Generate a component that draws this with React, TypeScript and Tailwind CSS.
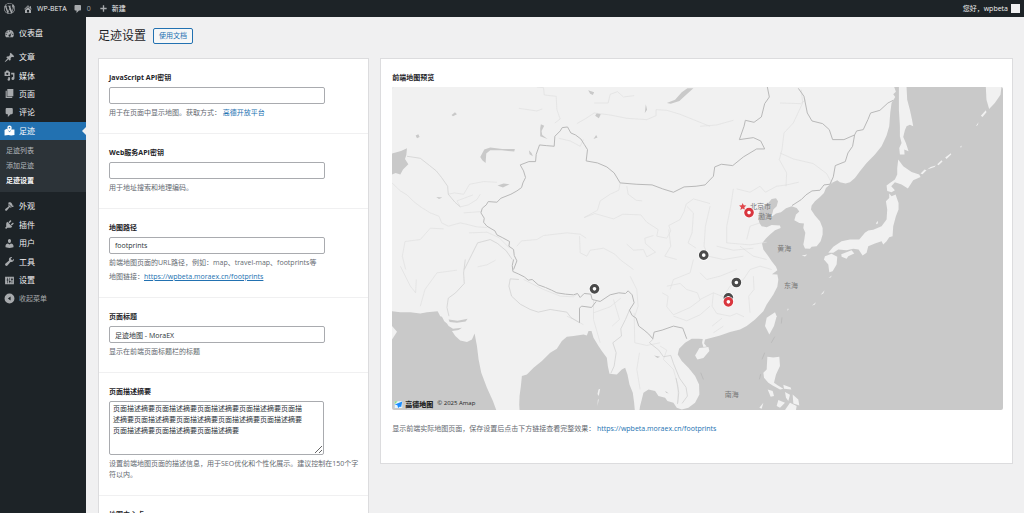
import clsx from 'clsx'
import type { ReactNode } from 'react'

const SITE_URL = 'https://wpbeta.moraex.cn/footprints'

function Icon({ d, className }: { d: string, className?: string }) {
  return (
    <svg viewBox="0 0 20 20" fill="currentColor" fillRule="evenodd" aria-hidden="true" className={clsx('shrink-0', className)}>
      <path d={d} />
    </svg>
  )
}

const icons = {
  wordpress: 'M20 10c0-5.51-4.49-10-10-10C4.48 0 0 4.49 0 10c0 5.52 4.48 10 10 10 5.51 0 10-4.48 10-10zM7.780 15.370L4.370 6.220c.55-.02 1.170-.08 1.170-.08.5-.06.44-1.130-.06-1.110 0 0-1.450.11-2.370.11-.18 0-.37 0-.58-.01C4.120 2.690 6.870 1.110 10 1.110c2.330 0 4.450.87 6.050 2.340-.68-.11-1.650.39-1.650 1.580 0 .74.45 1.360.9 2.100.35.61.55 1.360.55 2.460 0 1.490-1.400 5-1.400 5l-3.030-8.370c.54-.02.82-.17.82-.17.5-.05.44-1.250-.06-1.220 0 0-1.440.12-2.380.12-.87 0-2.330-.12-2.330-.12-.5-.03-.56 1.200-.06 1.220l.92.08 1.260 3.410zM17.410 10c.24-.64.74-1.870.43-4.250.7 1.290 1.050 2.710 1.050 4.250 0 3.290-1.730 6.240-4.400 7.780.97-2.590 1.940-5.200 2.920-7.780zM6.100 18.090C3.120 16.650 1.110 13.530 1.110 10c0-1.300.23-2.480.72-3.590C3.250 10.300 4.670 14.200 6.100 18.090zm4.030-6.630l2.580 6.980c-.86.29-1.760.45-2.710.45-.79 0-1.570-.11-2.290-.33.81-2.380 1.620-4.740 2.420-7.100z',
  home: 'M16 8.500l1.530 1.530-1.060 1.060L10 4.600l-6.470 6.490-1.060-1.060L10 2.500l4 4v-2h2v4zm-6-2.460l6 5.990V18H4v-5.970zM12 17v-5H8v5h4z',
  comment: 'M5 2h9c1.100 0 2 .9 2 2v7c0 1.100-.9 2-2 2h-2l-5 5v-5H5c-1.100 0-2-.9-2-2V4c0-1.100.9-2 2-2z',
  plus: 'M8.500 3h3v5.500H17v3h-5.500V17h-3v-5.500H3v-3h5.500z',
  dashboard: 'M3.760 17h12.480c1.100-1.460 1.760-3.190 1.760-5.150C18 7.200 14.420 3.500 10 3.500S2 7.200 2 11.850C2 13.810 2.660 15.540 3.760 17zM10 4.500a1 1 0 110 2 1 1 0 010-2zM5.500 6.500a1 1 0 110 2 1 1 0 010-2zM14.500 7.200l-2.600 5.600a2 2 0 11-1.300-.8zM4 10.500a1 1 0 110 2 1 1 0 010-2zm12 0a1 1 0 110 2 1 1 0 010-2z',
  post: 'M10.440 3.020l1.820-1.820 6.360 6.350-1.830 1.820c-1.050-.68-2.480-.57-3.410.36l-.75.750c-.92.930-1.040 2.350-.35 3.410l-1.830 1.820-2.410-2.410-2.800 2.790c-.42.420-3.380 2.710-3.800 2.290s1.860-3.390 2.280-3.810l2.790-2.790L4.100 9.360l1.830-1.820c1.050.69 2.480.57 3.400-.36l.75-.75c.93-.920 1.050-2.350.36-3.410z',
  media: 'M1 3h2l1-2h4l1 2h2v8H1zM6 5a2 2 0 100 4 2 2 0 000-4zM13 5h6v10.500a2.700 2.700 0 11-2.500-2.700V8H13zM7 13h4v4.500A2.300 2.300 0 118 15z',
  page: 'M6 15V2h11v13zM3 5h2v11h10v2H3z',
  footprints: 'M1 9l4-2 2 1c.5 1.500 1.700 3.500 3 5 1.500-1.500 2.700-3.200 3-5h6v10l-6 1-5-1-7 1zM10 1a4 4 0 014 4c0 3-2.500 5-4 7-1.500-2-4-4-4-7a4 4 0 014-4zm0 2.500a1.500 1.500 0 100 3 1.500 1.500 0 000-3z',
  appearance: 'M14.480 11.060L7.410 3.990l1.500-1.500c.5-.56 2.300-.47 3.510.32 1.210.8 1.430 1.280 2 2.100 1.180 1.660 1.380 2.720 1.190 3.580.610.110 2.160-.56 2.350.72-.6 1.300-2.200 1.900-3.480 1.850zM6.700 4.700l7.070 7.070c-.72.720-1.420.72-2.120 0-.8-.8-1.600-.4-2.300.3L5.300 17.300c-.78.780-2.050.78-2.830 0s-.78-2.050 0-2.830l5.230-4.050c.7-.7 1.100-1.500.3-2.300-.7-.7-.7-1.400 0-2.120z',
  plugin: 'M13.110 4.360L9.870 7.600 8 5.730l3.240-3.240c.350-.34 1.050-.2 1.560.32.52.51.66 1.210.31 1.550zm-8 1.770l.91-1.120 9.010 9.010-1.190.84c-.71.710-2.630 1.160-3.820 1.160H6.140L4.900 17.260c-.59.59-1.540.59-2.120 0-.59-.58-.59-1.530 0-2.120l1.240-1.240v-3.880c0-1.130.4-3.190 1.090-3.890zm7.260 3.970l3.240-3.240c.340-.35 1.040-.21 1.550.31.520.51.66 1.210.31 1.550l-3.240 3.250z',
  users: 'M10 9.250c-2.270 0-2.730-3.440-2.730-3.440C7 4.020 7.820 2 9.970 2c2.160 0 2.980 2.020 2.710 3.810 0 0-.41 3.440-2.680 3.440zm0 2.570L12.720 10c2.390 0 4.520 2.330 4.520 4.530v2.490s-3.650 1.130-7.240 1.130c-3.650 0-7.240-1.130-7.240-1.130v-2.490c0-2.250 1.940-4.480 4.470-4.480z',
  tools: 'M16.680 9.770c-1.340 1.340-3.300 1.670-4.950.99l-5.410 6.520c-.99.99-2.590.99-3.580 0s-.99-2.590 0-3.570l6.520-5.420c-.68-1.650-.35-3.610.99-4.950 1.280-1.280 3.120-1.620 4.720-1.060l-2.890 2.890 2.820 2.820 2.860-2.870c.53 1.580.18 3.390-1.080 4.650z',
  settings: 'M2 3h16v14H2zM6 5v3H5v2h1v5h1v-5h1V8H7V5zm4 0v6H9v2h1v2h1v-2h1v-2h-1V5zm4 0v2h-1v2h1v6h1V9h1V7h-1V5z',
  collapse: 'M10 1a9 9 0 110 18 9 9 0 010-18zm2 5.500L7 10l5 3.500z',
}

const contentMenu = [
  { icon: icons.post, label: '文章' },
  { icon: icons.media, label: '媒体' },
  { icon: icons.page, label: '页面' },
  { icon: icons.comment, label: '评论' },
  { icon: icons.footprints, label: '足迹', current: true },
]

const footprintsMenu = [
  { label: '足迹列表' },
  { label: '添加足迹' },
  { label: '足迹设置', current: true },
]

const systemMenu = [
  { icon: icons.appearance, label: '外观' },
  { icon: icons.plugin, label: '插件' },
  { icon: icons.users, label: '用户' },
  { icon: icons.tools, label: '工具' },
  { icon: icons.settings, label: '设置' },
]

function AdminBar() {
  return (
    <header className="flex h-[17px] shrink-0 items-center justify-between bg-[#1d2327] px-1 text-[7px] text-[#f0f0f1]">
      <nav className="flex items-center">
        <a href="#wp" aria-label="WordPress">
          <Icon d={icons.wordpress} className="size-[11px] text-[#a7aaad]" />
        </a>
        <a href="#site" className="ml-2 flex items-center gap-1">
          <Icon d={icons.home} className="size-[10px] text-[#a7aaad]" />
          WP-BETA
        </a>
        <a href="#comments" className="ml-[6px] flex items-center gap-1 text-[#a7aaad]">
          <Icon d={icons.comment} className="size-[10px]" />
          0
        </a>
        <a href="#new" className="ml-2 flex items-center gap-1">
          <Icon d={icons.plus} className="size-[9px] text-[#a7aaad]" />
          新建
        </a>
      </nav>
      <a href="#profile" className="flex items-center gap-[3px]">
        您好，wpbeta
        <span className="size-[9px] bg-[#f0f0f1]" />
      </a>
    </header>
  )
}

function MenuLink({ icon, label, current }: { icon: string, label: string, current?: boolean }) {
  return (
    <a
      href="#menu"
      className={clsx(
        'relative flex h-full items-center gap-1 pl-1 text-[8px]',
        current ? 'bg-[#2271b1] text-white' : 'text-[#f0f0f1]',
      )}
    >
      <Icon d={icon} className={clsx('size-[11px]', current ? 'text-white' : 'text-[#a7aaad]')} />
      {label}
      {current ? (
        <span className="absolute right-0 border-y-4 border-r-4 border-y-transparent border-r-[#f0f0f1]" />
      ) : null}
    </a>
  )
}

function Sidebar() {
  return (
    <nav className="w-[86px] shrink-0 bg-[#1d2327] pt-[7px]">
      <div className="mb-[6px] h-[18px]">
        <MenuLink icon={icons.dashboard} label="仪表盘" />
      </div>
      <ul className="grid h-[92px] auto-rows-fr">
        {contentMenu.map(item => (
          <li key={item.label}><MenuLink {...item} /></li>
        ))}
      </ul>
      <ul className="mb-[5px] bg-[#2c3338] px-[6px] pt-[3px] pb-1">
        {footprintsMenu.map(item => (
          <li key={item.label} className="h-[15px] text-[7px] leading-[15px]">
            <a href="#submenu" className={item.current ? 'font-bold text-white' : 'text-[#b4b9be]'}>{item.label}</a>
          </li>
        ))}
      </ul>
      <ul className="grid h-[111px] auto-rows-fr">
        {systemMenu.map(item => (
          <li key={item.label}><MenuLink {...item} /></li>
        ))}
        <li>
          <button type="button" className="flex h-full items-center gap-1 pl-1 text-[7px] text-[#a7aaad]">
            <Icon d={icons.collapse} className="size-[11px]" />
            收起菜单
          </button>
        </li>
      </ul>
    </nav>
  )
}

function Field({ id, label, children }: { id: string, label: string, children: ReactNode }) {
  return (
    <div className="border-b border-[#f0f0f1] px-[10px] pt-[13px] pb-[15px]">
      <label htmlFor={id} className="mb-[3px] block text-[7px] leading-[12px] font-bold text-[#1d2327]">{label}</label>
      {children}
    </div>
  )
}

function TextInput({ id, value = '' }: { id: string, value?: string }) {
  return (
    <input
      id={id}
      type="text"
      defaultValue={value}
      className="block h-[17px] w-[216px] rounded-[2px] border border-[#a9abaf] bg-white px-[5px] text-[7px] text-[#2c3338]"
    />
  )
}

function Hint({ children }: { children: ReactNode }) {
  return <p className="mt-[3px] text-[7px] leading-[11px] text-[#646970]">{children}</p>
}

function SettingsForm() {
  return (
    <form className="border border-[#dcdcde] bg-white">
      <Field id="js-key" label="JavaScript API密钥">
        <TextInput id="js-key" />
        <Hint>
          用于在页面中显示地图。获取方式：
          {' '}
          <a href="#amap" className="text-[#2271b1]">高德开放平台</a>
        </Hint>
      </Field>
      <Field id="web-key" label="Web服务API密钥">
        <TextInput id="web-key" />
        <Hint>用于地址搜索和地理编码。</Hint>
      </Field>
      <Field id="map-path" label="地图路径">
        <TextInput id="map-path" value="footprints" />
        <Hint>前端地图页面的URL路径，例如：map、travel-map、footprints等</Hint>
        <Hint>
          地图链接：
          <a href={SITE_URL} className="text-[#2271b1] underline">{SITE_URL}</a>
        </Hint>
      </Field>
      <Field id="page-title" label="页面标题">
        <TextInput id="page-title" value="足迹地图 - MoraEX" />
        <Hint>显示在前端页面标题栏的标题</Hint>
      </Field>
      <Field id="page-desc" label="页面描述摘要">
        <textarea
          id="page-desc"
          defaultValue={'页面描述摘要'.repeat(12)}
          className="block h-[54px] w-[215px] rounded-[2px] border border-[#a9abaf] bg-white py-px pr-[20px] pl-[3px] text-[7px] leading-[11px] text-[#2c3338]"
        />
        <Hint>设置前端地图页面的描述信息，用于SEO优化和个性化展示。建议控制在150个字符以内。</Hint>
      </Field>
      <Field id="map-center" label="地图中心点">
        <TextInput id="map-center" />
      </Field>
    </form>
  )
}

const mainland = 'M35 82H1543L1548 96 1540 104 1546 112 1535 130 1531 160 1528 200 1520 228 1505 260 1485 285 1460 310 1440 335 1425 355 1410 368 1397 372 1380 368 1372 362 1355 370 1338 385 1332 400 1320 412 1305 425 1295 438 1293 450 1305 468 1320 485 1328 505 1328 525 1322 545 1310 560 1295 562 1290 568 1275 567 1270 555 1273 540 1276 520 1270 505 1272 492 1258 490 1243 482 1248 465 1258 456 1250 445 1235 440 1218 446 1203 458 1188 462 1170 475 1177 462 1180 450 1190 440 1194 425 1188 416 1175 418 1165 430 1150 440 1138 455 1135 475 1138 490 1145 500 1160 503 1175 496 1200 498 1202 505 1185 512 1170 525 1157 538 1146 552 1150 570 1165 590 1175 605 1188 622 1192 632 1176 644 1192 645 1195 660 1192 682 1180 705 1160 735 1150 755 1125 780 1100 800 1080 810 1050 818 1020 828 995 835 975 840 972 852 980 861 970 863 966 850 968 839 955 838 935 838 915 850 897 868 893 885 905 905 925 925 945 950 957 975 958 1005 945 1030 925 1045 905 1050 890 1045 880 1030 862 1025 855 1015 835 1010 825 995 805 990 790 1000 785 1020 780 1040 778 1052H764L762 1030 758 1000 748 975 742 945 735 925 725 930 710 945 688 943 683 920 680 895 665 875 655 860 640 835 634 815 625 815 620 828 610 825 580 830 560 832 545 845 530 868 510 880 485 905 460 925 440 945 425 950 422 980 418 1010 417 1035 418 1052H348L338 1025 320 985 303 940 295 900 290 860 283 822 275 840 260 848 240 843 225 830 215 815 235 812 245 805 218 808 205 800 200 792 192 785 185 772 180 770 172 755 140 758 120 762 90 758 60 758 35 755Z'

const islands = [
  // Sakhalin, Kamchatka
  'M1557 82H1580L1582 120 1590 150 1596 178 1600 200 1590 195 1580 200 1575 212 1570 232 1578 250 1586 275 1573 270 1574 285 1560 285 1558 265 1565 250 1560 230 1560 200 1557 150Z',
  'M1818 82H1865L1862 105 1845 130 1828 148 1820 120Z',
  // Japan
  'M1555 300L1570 320 1595 337 1618 345 1622 352 1600 362 1584 387 1565 375 1545 368 1534 380 1545 392 1535 398 1522 394 1520 378 1530 370 1545 360 1552 345 1552 325Z',
  'M1528 402L1535 410 1547 405 1556 430 1556 450 1548 470 1540 500 1538 530 1528 533 1520 545 1510 555 1505 545 1485 552 1465 560 1460 580 1448 588 1436 570 1420 568 1400 572 1375 570 1360 580 1345 580 1360 562 1385 545 1410 540 1438 540 1455 520 1465 513 1480 511 1505 500 1520 480 1522 450 1518 425 1528 415Z',
  'M1384 584L1415 572 1423 582 1405 590 1400 598 1385 592ZM1335 590L1355 583 1372 592 1370 615 1358 635 1348 638 1345 615 1332 600ZM1490 488L1494 484 1494 492 1488 494ZM1265 588L1282 585 1275 591Z',
  // Taiwan, Luzon, Visayas, Hainan
  'M1185 758L1190 770 1182 800 1168 825 1155 800 1160 775Z',
  'M1162 892L1180 894 1198 892 1200 920 1188 945 1182 970 1194 978 1210 988 1200 990 1178 978 1165 970 1152 955 1150 940 1160 930Z',
  'M1163 990L1178 995 1182 1010 1172 1012ZM1210 976L1232 984 1234 990 1212 988ZM1195 1022L1215 1030 1200 1045 1190 1040ZM1215 998L1230 1006 1225 1025 1218 1015ZM1238 1005L1255 1020 1258 1038 1240 1032ZM1230 1030L1250 1040 1248 1052H1215ZM1138 1045L1150 1030 1145 1048ZM945 888L958 866 985 863 988 875 970 896 952 900Z',
  'M35 800L50 817 35 840Z',
  // Kuril chain, Ryukyu
  'M1622 342L1634 330 1640 332 1628 344ZM1642 330L1664 322 1668 318 1652 322ZM1672 314L1685 302 1688 306 1676 317ZM1696 294L1713 281 1714 285 1700 298ZM1740 262L1746 258 1744 264ZM1803 168L1818 152 1820 158 1808 172ZM1788 200L1796 188 1794 196Z',
  'M1296 738L1308 728 1304 736ZM1322 706L1334 692 1330 702ZM1346 655L1356 648 1352 654ZM1221 754L1224 746 1226 750ZM655 990L660 988 656 1010 652 1004ZM653 1022L656 1018 652 1040Z',
]

const lakes = [
  'M35 282L62 274 80 266 78 286 74 298 84 314 68 330 60 345 46 340 35 345Z',
  'M300 292L312 270 330 264 366 268 404 268 402 276 384 274 364 272 330 272 318 282 316 310 306 302Z',
  'M352 378L370 372 388 374 368 384ZM860 130L885 120 905 98 922 86H940L915 108 898 124 872 132ZM794 160L797 134 801 150ZM645 168L650 160 662 164 656 176ZM640 238L648 226 652 234ZM482 194L492 198 484 214 486 226 502 238 480 230 480 206ZM446 272L454 280 458 290 448 284ZM214 166L224 158 230 164 218 170ZM106 228L114 224 118 232 110 236ZM624 92L642 98 638 106 630 102ZM205 780L232 784 262 778 256 786 230 790 208 788ZM855 994L866 1002 858 1000ZM822 888L840 892 832 896ZM168 412L186 414 176 418Z',
]

const nationalBorders = [
  'M400 630L410 604 402 588 400 570 386 560 388 546 366 534 350 526 344 514 320 500 310 488 312 476 302 460 306 446 318 436 324 426 350 428 362 416 392 404 410 394 424 384 428 370 436 354 430 334 420 316 446 306 466 306 468 284 478 256 498 258 522 260 524 230 540 214 546 204 562 202 572 220 586 226 602 238 612 254 622 270 618 304 652 310 680 322 702 340 720 370 768 374 816 376 848 388 880 398 912 382 948 380 975 376 1000 350 1004 322 1024 314 1058 318 1090 292 1130 268 1154 268 1142 244 1120 234 1078 240 1092 200 1096 182 1122 188 1144 172 1154 132 1168 112 1162 82',
  'M1255 86L1272 110 1282 160 1296 184 1328 192 1348 210 1358 240 1392 240 1424 226 1418 260 1404 280 1396 306 1366 318 1360 352 1350 374 1332 376 1320 392 1296 394 1278 406 1264 420 1236 438',
  'M1424 226L1430 214 1450 210 1464 180 1472 160 1500 152 1524 130 1540 122',
  'M400 600L396 618 398 636 416 644 432 652 444 662 456 660 474 676 496 684 514 692 530 700 556 704 580 706 592 702 600 714 612 702 632 704 636 720 660 726 690 706 716 700 736 702 744 694 756 706 762 730 748 752 756 768 768 776 776 800 792 812 806 824 818 838 822 818 846 812 880 800 908 806 920 838',
  'M598 790L598 746 604 740 634 744 648 726',
]

// Thinner than the national borders above, one step lighter
const countryLines = [
  'M748 752L736 780 722 808 724 830 698 850 708 880 702 920 692 942',
  'M820 838L808 850 836 872 850 892 872 888 880 912 898 956 918 984 922 1010 906 1032M888 956L896 1000 892 1034',
  'M80 290L120 296 148 318 168 334 184 354 202 380 204 404 224 428 240 442',
  'M255 600L250 640 252 672 226 700 204 716 200 744 206 770M252 630L280 574 292 550 330 540 352 552 378 574 396 600',
  'M416 660L390 658 386 680 394 710 420 734 450 750 474 758 510 750 560 758 572 774 598 790',
]

const provinceLines = [
  'M35 370L60 394 80 406 100 426 124 444 150 460 176 470 184 490 204 500 240 490 258 494 290 502 320 504',
  'M204 404L222 400 250 404 268 374 310 366 350 368M240 442L230 424 278 406M240 442L264 436 290 420 300 404M250 460L304 456',
  'M76 630L66 590 74 546 120 540 150 506 190 508M266 520L320 518 356 534 388 566',
  'M410 560L424 544 470 540 490 528 560 520 600 524 618 536M598 530L600 580 620 590 630 572 670 566 704 584 722 602 760 630',
  'M720 370L716 392 690 404 660 424 652 452 612 474 644 462 700 478 728 464 782 466 800 488 834 510 830 530 860 536 872 514 866 498 900 480 912 456 918 434 940 418 990 432',
  'M740 380L744 404 768 422 786 424M740 554L760 572 790 570 800 592 826 578 796 552 794 536 820 528M470 82L490 84 492 106 528 110 530 150 540 178 524 190M590 192L618 176 642 160 690 166 740 176 800 180 828 168 828 150 860 152 900 164 940 180 990 200M642 130L684 130 690 104 712 96 730 112 762 108M416 146L470 154 486 148M536 236L570 244 600 260 610 240',
  'M292 622L320 616 346 602M430 660L490 690 540 710 580 712 592 702M560 770L590 784 610 796M750 650L770 690 774 740 764 770M762 760L764 850 800 858 840 850M778 880L770 930 780 990M840 860L860 872 850 900 880 930 894 980 894 1030',
  'M860 680L900 672 920 690 952 700 960 722 930 744 880 766 860 742 864 710 846 700M940 600L930 640 880 660 870 690M880 770L920 784 960 766 990 740M960 720L1000 700 1030 712 1050 680 1090 660 1110 630 1140 620 1175 630M1000 700L996 740 1010 762 1050 770 1070 762 1092 772M1120 650L1122 690 1106 710 1110 760M996 800L1026 776M1000 820L1030 800',
  'M960 200L1010 196 1060 182M1060 388L1052 440 1040 500 1040 550 1110 556 1160 548M1070 388L1110 398 1140 380 1156 398 1190 380 1220 376 1256 368M1100 540L1110 500 1140 490M1080 560L1120 590 1160 600M1264 90L1268 130 1240 190 1212 220 1206 270 1198 300 1220 340 1218 380M1200 280L1240 298 1300 312 1340 342 1356 372M1200 130L1262 132 1278 120M920 440L940 460 936 520 924 550 948 566M866 510L872 560 854 590 890 600M990 440L976 500 972 560 984 590 1030 600 1090 590M1010 560L1060 572 1120 566M960 640L980 660 1020 650 1070 630',
  'M60 620L90 680 106 700 108 660M120 740L134 690 170 640 230 632M640 720L640 780 660 850M700 720L718 780 696 800M640 760L690 742 722 716',
]

const mapLabels = [
  { text: '北京市', x: 1110, y: 449 },
  { text: '渤海', x: 1134, y: 478 },
  { text: '黄海', x: 1192, y: 574 },
  { text: '东海', x: 1212, y: 686 },
  { text: '南海', x: 1034, y: 1012 },
]

const markers = [
  { x: 971, y: 587, className: 'stroke-[#4a4a4a]' },
  { x: 643, y: 688, className: 'stroke-[#4a4a4a]' },
  { x: 1069, y: 669, className: 'stroke-[#4a4a4a]' },
  { x: 1045, y: 715, className: 'stroke-[#4a4a4a]' },
  { x: 1045, y: 727, className: 'stroke-[#d9363e]' },
  { x: 1107, y: 459, className: 'stroke-[#d9363e]' },
]

function FootprintsMap() {
  return (
    <div className="relative overflow-hidden rounded-[2px] bg-[#c9c9c9]">
      <svg viewBox="35 82 1834 970" role="img" aria-label="足迹地图" className="block w-full">
        <g className="fill-[#f1f1f1]">
          <path d={mainland} />
          {islands.map(d => <path key={d} d={d} />)}
        </g>
        <g className="fill-[#c9c9c9]">
          {lakes.map(d => <path key={d} d={d} />)}
        </g>
        <g className="fill-none stroke-[#e0e0e0] stroke-2" strokeLinejoin="round">
          {provinceLines.map(d => <path key={d} d={d} />)}
        </g>
        <g className="fill-none stroke-[#cbcbcb] stroke-2" strokeLinejoin="round">
          {countryLines.map(d => <path key={d} d={d} />)}
        </g>
        <g className="fill-none stroke-[#b8b8b8] stroke-3" strokeLinejoin="round">
          {nationalBorders.map(d => <path key={d} d={d} />)}
        </g>
        <g className="fill-none stroke-[#b4b4b4] stroke-2">
          <path d="M1174 850L1184 832M1146 900L1154 880M1138 960L1142 944M962 940L970 960M1204 792L1206 774" />
        </g>
        <g className="fill-[#777] text-[21px]">
          {mapLabels.map(({ text, x, y }) => (
            <text key={text} x={x} y={y}>{text}</text>
          ))}
        </g>
        <path className="fill-[#e0474c]" d="M1088 430l3 7 8 1-6 5 2 8-7-4-7 4 2-8-6-5 8-1z" />
        {markers.map(({ x, y, className }) => (
          <g key={`${x}-${y}`}>
            <circle cx={x} cy={y} r="17" className="fill-white/70" />
            <circle cx={x} cy={y} r="10" strokeWidth="9" className={clsx('fill-white', className)} />
          </g>
        ))}
      </svg>
      <div className="absolute bottom-0 left-[2px] flex items-center text-[7px] leading-[8px] text-[#222]">
        <svg viewBox="0 0 24 24" aria-hidden="true" className="size-[9px]">
          <path className="fill-[#e8f7ff]" d="M2 3h20v18H2z" />
          <path className="fill-[#8fdc8a]" d="M2 3h8L2 11z" />
          <path className="fill-[#1a8cff]" d="M22 4L2 12l7 2 2 7 5-4 3 2z" />
        </svg>
        <span className="ml-[2px] text-[7px] font-black">高德地图</span>
        <span className="mb-[3px] ml-[4px] text-[6px]">© 2025 Amap</span>
      </div>
    </div>
  )
}

export default function App() {
  return (
    <div
      lang="zh-CN"
      className="flex h-screen flex-col overflow-hidden bg-[#f0f0f1] font-['Open_Sans','Noto_Sans_CJK_SC',sans-serif] leading-[12px]"
    >
      <AdminBar />
      <div className="flex min-h-0 grow">
        <Sidebar />
        <main className="min-w-0 grow pr-[11px] pl-3">
          <div className="flex h-[41px] items-center gap-[7px] pb-[3px]">
            <h1 className="text-[12px] text-[#1d2327]">足迹设置</h1>
            <a href="#docs" className="flex h-[16px] items-center rounded-[2px] border border-[#2271b1] bg-[#f6f7f7] px-[5px] text-[7px] text-[#2271b1]">
              使用文档
            </a>
          </div>
          <div className="grid grid-cols-[3fr_7fr] items-start gap-[11px]">
            <SettingsForm />
            <section className="border border-[#dcdcde] bg-white pt-[13px] pr-[9px] pb-[29px] pl-[11px]">
              <h2 className="mb-[3px] text-[7px] leading-[12px] font-bold text-[#1d2327]">前端地图预览</h2>
              <FootprintsMap />
              <p className="mt-[13px] text-[7px] leading-[11px] text-[#646970]">
                显示前端实际地图页面，保存设置后点击下方链接查看完整效果：
                {' '}
                <a href={SITE_URL} className="text-[#2271b1]">{SITE_URL}</a>
              </p>
            </section>
          </div>
        </main>
      </div>
    </div>
  )
}
